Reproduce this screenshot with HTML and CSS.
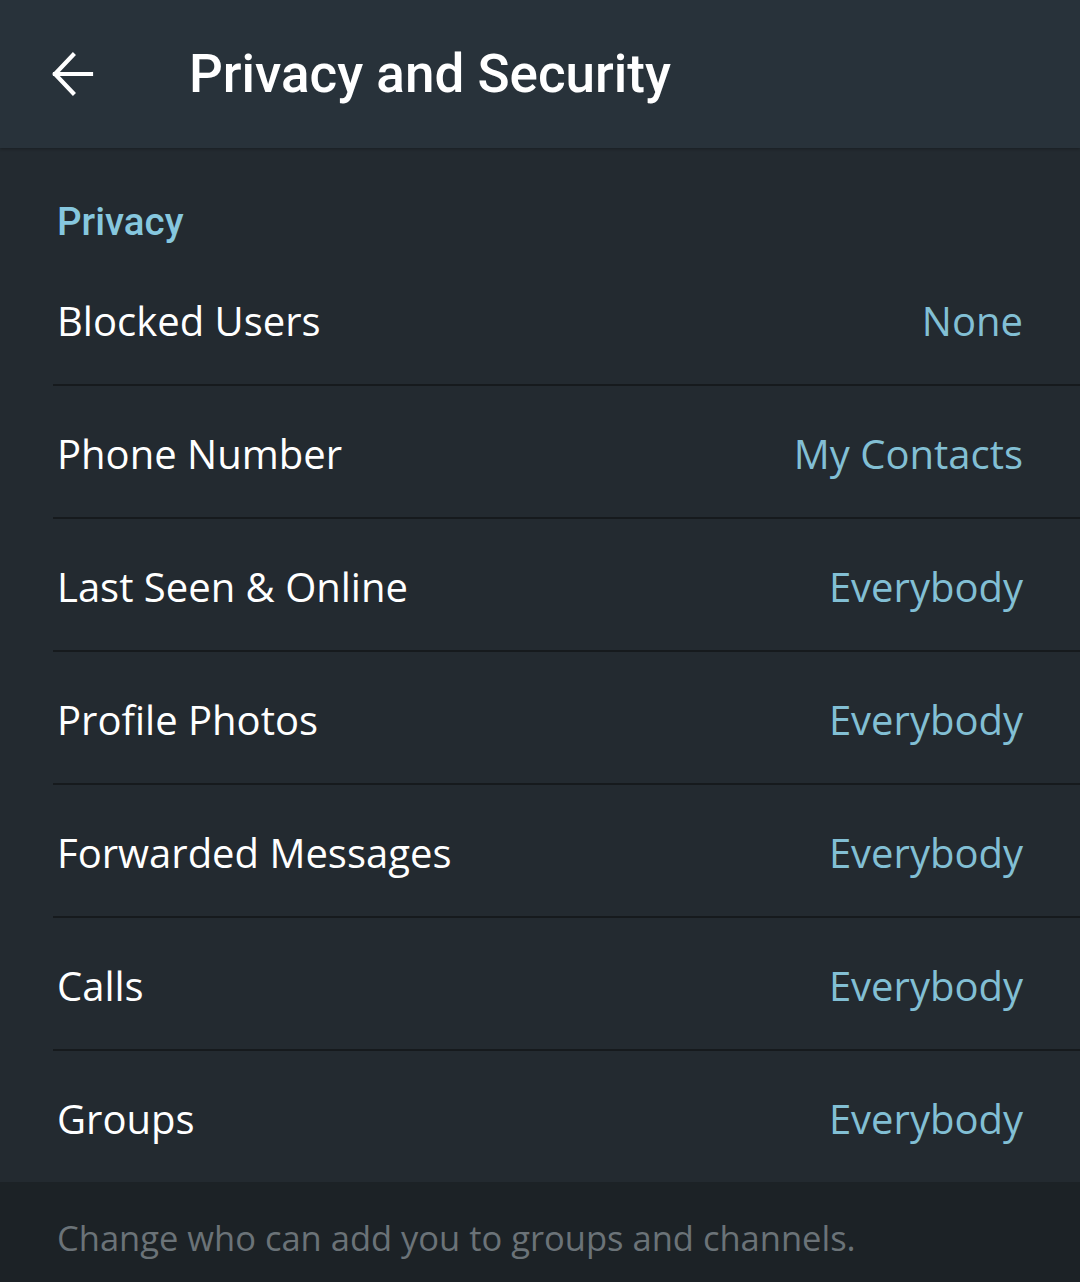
FILE: index.html
```html
<!DOCTYPE html>
<html>
<head>
<meta charset="utf-8">
<link rel="stylesheet" href="styles.css">
</head>
<body>
<div class="app">
  <header class="topbar">
    <div class="back">
      <svg width="44" height="44" viewBox="0 0 44 44"><path d="M40 22H4M22 3L4 22l18 19" fill="none" stroke="#ffffff" stroke-width="4.2" stroke-linecap="square"/></svg>
    </div>
    <h1 class="title">Privacy and Security</h1>
  </header>
  <main class="content">
    <div class="section-title">Privacy</div>
    <div class="row"><span class="label">Blocked Users</span><span class="value">None</span></div>
    <div class="row"><span class="label">Phone Number</span><span class="value">My Contacts</span></div>
    <div class="row"><span class="label">Last Seen &amp; Online</span><span class="value">Everybody</span></div>
    <div class="row"><span class="label">Profile Photos</span><span class="value">Everybody</span></div>
    <div class="row"><span class="label">Forwarded Messages</span><span class="value">Everybody</span></div>
    <div class="row"><span class="label">Calls</span><span class="value">Everybody</span></div>
    <div class="row last"><span class="label">Groups</span><span class="value">Everybody</span></div>
  </main>
  <footer class="hint">Change who can add you to groups and channels.</footer>
</div>
</body>
</html>
```
FILE: styles.css
```css
html, body {
  margin: 0;
  padding: 0;
  background: #1c2226;
}
.app {
  width: 1080px;
  height: 1282px;
  display: flex;
  flex-direction: column;
  background: #1c2226;
}
.topbar {
  height: 148px;
  background: #28323a;
  display: flex;
  align-items: center;
  box-shadow: 0 1px 3px rgba(0,0,0,0.3);
  position: relative;
  z-index: 1;
}
.back {
  width: 44px;
  height: 44px;
  margin-left: 51px;
  margin-top: -1px;
  display: flex;
}
.title {
  margin: 0 0 0 94px;
  font-family: Roboto, "Liberation Sans", sans-serif;
  font-weight: 500;
  font-size: 53px;
  color: #ffffff;
  letter-spacing: 0;
}
.content {
  background: #232a30;
}
.section-title {
  height: 105px;
  box-sizing: border-box;
  padding: 52px 0 0 57px;
  font-family: Roboto, "Liberation Sans", sans-serif;
  font-weight: 500;
  font-size: 38.5px;
  line-height: 44px;
  color: #86c7de;
}
.row {
  height: 133px;
  margin-left: 53px;
  box-sizing: border-box;
  border-bottom: 2px solid #161a1d;
  display: flex;
  align-items: center;
  justify-content: space-between;
  padding: 4px 57px 0 4px;
  font-family: "Open Sans", "Noto Sans", sans-serif;
  font-size: 40px;
}
.row.last {
  border-bottom: none;
  height: 131px;
}
.label {
  color: #ffffff;
}
.value {
  color: #82bfd4;
}
.hint {
  flex: 1;
  background: #1c2226;
  padding: 32px 0 0 57px;
  font-family: "Open Sans", "Noto Sans", sans-serif;
  font-size: 34.5px;
  color: #6b7378;
}
```
